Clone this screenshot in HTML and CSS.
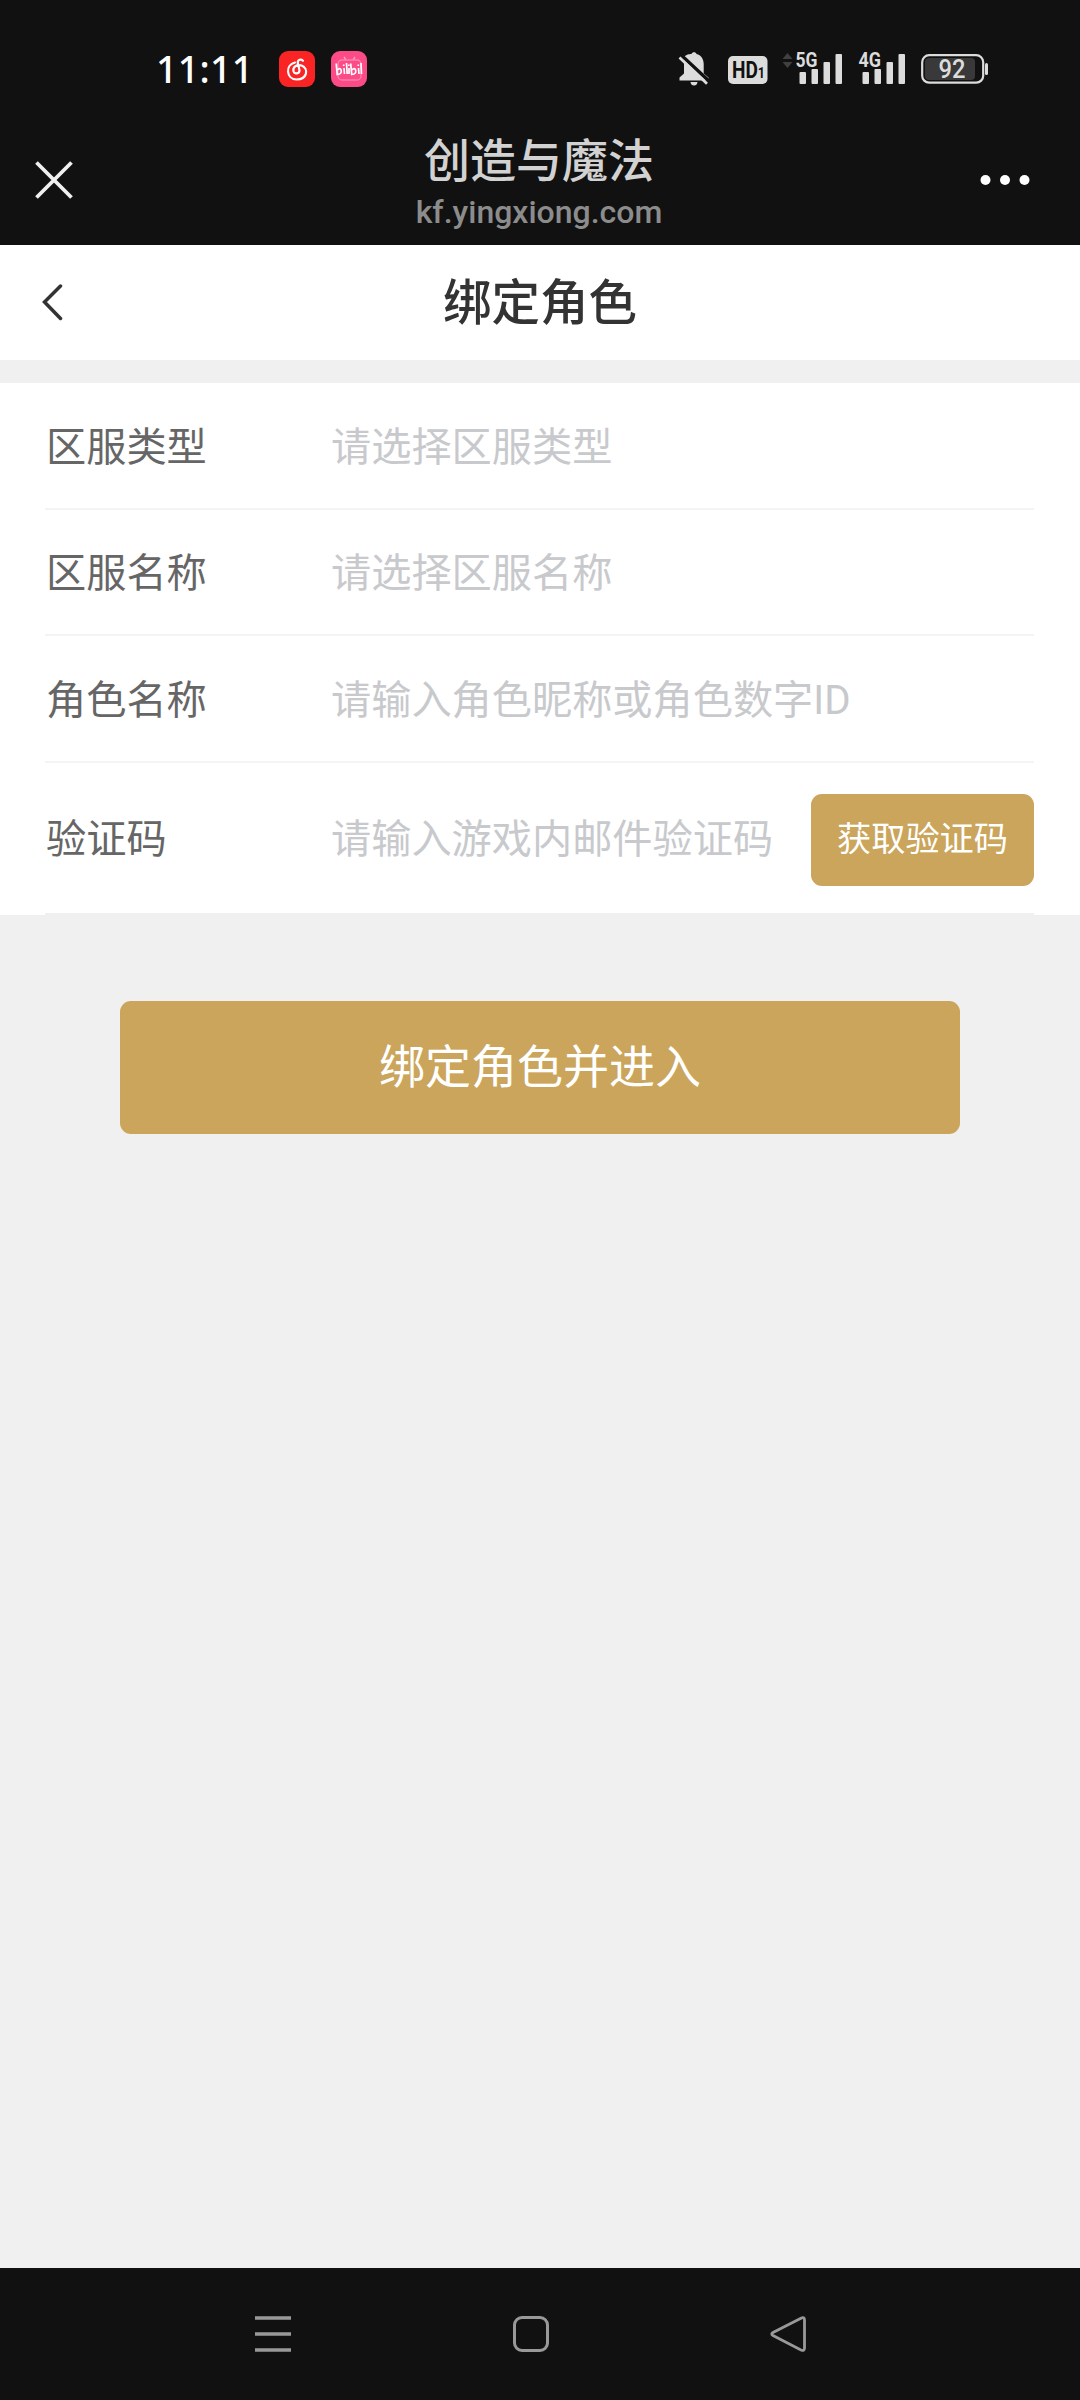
FILE: index.html
```html
<!DOCTYPE html>
<html lang="zh-CN">
<head>
<meta charset="utf-8">
<title>绑定角色</title>
<link rel="stylesheet" href="styles.css">
</head>
<body>
<div class="statusbar">
  <span class="clock">11:11</span>
  <svg class="app-icon" viewBox="0 0 36 36">
    <rect width="36" height="36" rx="9" fill="#fb2424"/>
    <path d="M16 11.500C6 14 7 28 17.500 28.500C28.500 28.500 30 17.500 22.500 14.500C18 13 13.500 16 14.500 20.200C15.500 23.500 20.500 23 20.500 19.300L18.800 12C18.500 8.500 22 7.800 24 9.700" fill="none" stroke="#fff" stroke-width="2.200" stroke-linecap="round"/>
  </svg>
  <svg class="app-icon" viewBox="0 0 36 36">
    <rect width="36" height="36" rx="9" fill="#fc4b87"/>
    <path d="M13 6l2 3M24 6l-2 3" stroke="#ff9dbf" stroke-width="1.500"/>
    <rect x="7" y="9" width="23" height="20" rx="4" fill="none" stroke="#ff83ae" stroke-width="1.300"/>
    <path d="M5.200 12.500L6.200 23.500Q11 23 10.200 19.500T6.200 19M13 17l.5 6M12.700 13.500v1.500M15.500 12l.7 11M18 17v6M17.800 13.500v1.500M19.700 12.500L20.700 23.500Q25.500 23 24.700 19.500T20.700 19M27.500 17l.5 6M27.300 13.500v1.500M30 12l.5 11" fill="none" stroke="#fff" stroke-width="1.700"/>
  </svg>
  <svg class="system-icons" viewBox="0 0 340 60">
    <g fill="#dcdcdc">
      <path d="M24 16.500C28 14 30 14 31.500 14C32 11.500 36 11.500 36.500 14C41 15 43.700 19 43.700 24V33.500L48.500 37.500V40.500H19.500V37.500L24 33.500Z"/>
      <path d="M30.500 42H37.500Q37 45.500 34 45.500T30.500 42Z"/>
      <rect x="68" y="16" width="39.500" height="28" rx="5"/>
      <rect x="139.500" y="32" width="6.500" height="12" rx="1"/>
      <rect x="151.500" y="29" width="6.500" height="15" rx="1"/>
      <rect x="163.500" y="22" width="6.500" height="22" rx="1"/>
      <rect x="175.500" y="14" width="6.500" height="30" rx="1"/>
      <rect x="202.500" y="32" width="6.500" height="12" rx="1"/>
      <rect x="214.500" y="29" width="6.500" height="15" rx="1"/>
      <rect x="226.500" y="22" width="6.500" height="22" rx="1"/>
      <rect x="238.500" y="14" width="6.500" height="30" rx="1"/>
      <rect x="325" y="23" width="3" height="12" rx="1.500"/>
    </g>
    <path d="M20.500 14.500L50 42" stroke="#111" stroke-width="3.500"/>
    <path d="M19.500 17.500L47 43.800" stroke="#dcdcdc" stroke-width="2.700"/>
    <path d="M122.500 19L127.500 13L132.500 19ZM122.500 22L127.500 28L132.500 22Z" fill="#404040"/>
    <rect x="262.200" y="15.200" width="61" height="27.500" rx="7" fill="none" stroke="#dcdcdc" stroke-width="2.200"/>
    <rect x="265" y="18" width="50" height="22" rx="4" fill="#393939"/>
    <text class="hd" x="72" y="38" textLength="33" lengthAdjust="spacingAndGlyphs">HD<tspan class="hd-index">1</tspan></text>
    <text class="network" x="135.500" y="27" textLength="22" lengthAdjust="spacingAndGlyphs">5G</text>
    <text class="network" x="198.500" y="27" textLength="22.500" lengthAdjust="spacingAndGlyphs">4G</text>
    <text class="battery" x="278.500" y="38" textLength="27" lengthAdjust="spacingAndGlyphs">92</text>
  </svg>
</div>

<header class="webbar">
  <svg class="close" viewBox="0 0 40 40"><path d="M2.500 2.500L37.500 37.500M37.500 2.500L2.500 37.500" stroke="#f0f0f0" stroke-width="3.800"/></svg>
  <div class="site">
    <div class="site-name">创造与魔法</div>
    <div class="site-host">kf.yingxiong.com</div>
  </div>
  <svg class="more" viewBox="0 0 50 12" fill="#fff"><circle cx="5.500" cy="6" r="5"/><circle cx="25" cy="6" r="5"/><circle cx="44.500" cy="6" r="5"/></svg>
</header>

<nav class="titlebar">
  <svg class="back" viewBox="0 0 22 38"><path d="M19.500 2L3.500 18L19.500 34.500" fill="none" stroke="#333" stroke-width="3.500" stroke-linecap="round"/></svg>
  <h1 class="title">绑定角色</h1>
</nav>

<main class="page">
  <form class="form">
    <div class="row"><span class="label">区服类型</span><span class="placeholder">请选择区服类型</span></div>
    <div class="row"><span class="label">区服名称</span><span class="placeholder">请选择区服名称</span></div>
    <div class="row"><span class="label">角色名称</span><span class="placeholder">请输入角色昵称或角色数字ID</span></div>
    <div class="row row-code"><span class="label">验证码</span><span class="placeholder">请输入游戏内邮件验证码</span><button type="button" class="code-button">获取验证码</button></div>
  </form>
  <button type="button" class="submit">绑定角色并进入</button>
</main>

<footer class="navbar">
  <svg class="nav-icon" viewBox="0 0 40 40"><path d="M2 4H38M2 20H38M2 36H38" stroke="#999" stroke-width="3.500"/></svg>
  <svg class="nav-icon" viewBox="0 0 40 40"><rect x="3.500" y="3.500" width="33" height="33" rx="7.500" fill="none" stroke="#999" stroke-width="3"/></svg>
  <svg class="nav-icon" viewBox="0 0 40 40"><path d="M32 4.200L4 18.500Q1.500 20 4 21.500L32 36Q35.500 37.500 35.500 34V6Q35.500 2.500 32 4.200Z" fill="none" stroke="#999" stroke-width="2.800"/></svg>
</footer>
</body>
</html>
```
FILE: styles.css
```css
* {
  box-sizing: border-box;
}

body {
  margin: 0;
  width: 1080px;
  height: 2400px;
  display: flex;
  flex-direction: column;
  background: #f0f0f0;
  font-family: Roboto, "Noto Sans CJK SC", sans-serif;
}

svg {
  display: block;
  flex: none;
}

button {
  border: 0;
  padding: 0;
  font-family: inherit;
  color: #fff;
  background: #caa55b;
}

.statusbar {
  height: 120px;
  padding-left: 156px;
  display: flex;
  align-items: flex-start;
  background: #111;
}

.clock {
  width: 123px;
  padding-top: 47px;
  font: 500 37.500px/44px "Noto Sans", sans-serif;
  letter-spacing: 0.300px;
  color: #fff;
}

.app-icon {
  width: 36px;
  height: 36px;
  margin: 51px 16px 0 0;
}

.system-icons {
  width: 340px;
  height: 60px;
  margin: 40px 0 0 277px;
}

.hd,
.hd-index,
.network,
.battery {
  font-family: Roboto, sans-serif;
  font-weight: 700;
  fill: #111;
}

.hd {
  font-size: 23px;
}

.hd-index {
  font-size: 15px;
}

.network {
  font-size: 21px;
  fill: #dcdcdc;
  stroke: #111;
  stroke-width: 2px;
  paint-order: stroke;
}

.battery {
  font-size: 25px;
  font-weight: 500;
  fill: #dcdcdc;
}

.webbar {
  height: 125px;
  padding: 0 50px 0 34px;
  display: grid;
  grid-template-columns: 50px 1fr 50px;
  background: #111;
}

.close {
  width: 40px;
  height: 40px;
  margin-top: 40px;
}

.site {
  padding-top: 13px;
  margin-left: 14px;
  text-align: center;
}

.site-name {
  height: 56px;
  font-size: 46px;
  line-height: 56px;
  font-weight: 500;
  color: #d2d2d2;
}

.site-host {
  font-size: 32px;
  line-height: 46px;
  font-weight: 500;
  color: #8c8c8c;
}

.more {
  width: 50px;
  height: 12px;
  margin: 54px 0 0 0;
}

.titlebar {
  height: 115px;
  padding: 0 41px;
  display: grid;
  grid-template-columns: 22px 1fr 22px;
  align-items: center;
  background: #fff;
}

.back {
  width: 22px;
  height: 38px;
}

.title {
  margin: 0;
  padding-top: 2px;
  text-align: center;
  font-size: 48.500px;
  line-height: 70px;
  font-weight: 500;
  color: #333;
}

.page {
  flex: 1;
  padding-top: 23px;
}

.form {
  height: 532px;
  padding: 0 46px 0 45px;
  background: #fff;
}

.row {
  height: 126.500px;
  padding-top: 5px;
  display: flex;
  align-items: center;
  border-bottom: 2px solid #f4f4f4;
  font-size: 40.200px;
  line-height: 60px;
  white-space: nowrap;
}

.row-code {
  height: 152px;
  border-bottom-color: #f0f0f0;
}

.label {
  width: 286px;
  padding-left: 1px;
  color: #666;
}

.placeholder {
  color: #c8c9cc;
}

.code-button {
  width: 223px;
  height: 92px;
  margin-left: auto;
  padding-bottom: 8px;
  border-radius: 11px;
  font-size: 34.200px;
}

.submit {
  display: block;
  width: 840px;
  height: 133px;
  margin: 86px auto 0;
  padding-bottom: 9px;
  border-radius: 11px;
  font-size: 46px;
}

.navbar {
  height: 132px;
  padding: 0 271px 0 253px;
  display: flex;
  justify-content: space-between;
  align-items: center;
  background: #111;
}

.nav-icon {
  width: 40px;
  height: 40px;
}
```
